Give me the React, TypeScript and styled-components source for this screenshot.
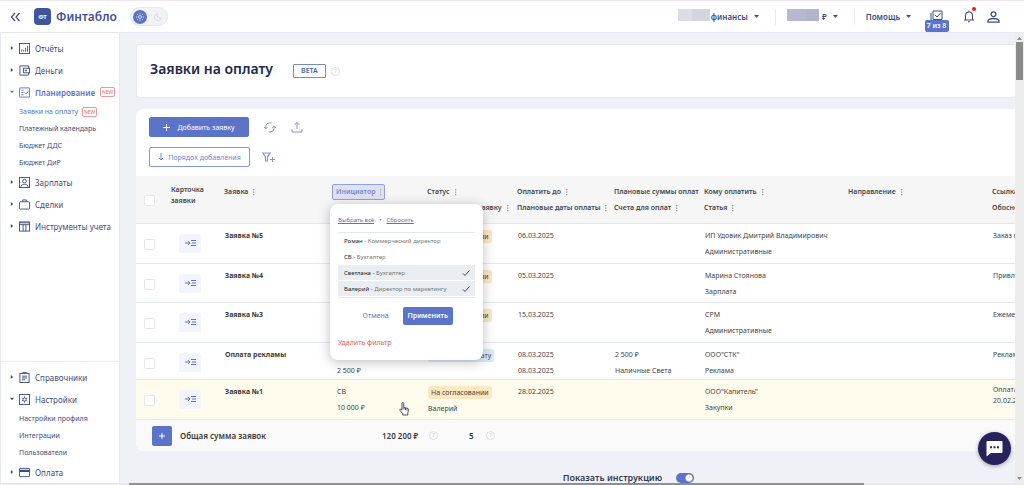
import React from "react";
import styled, { createGlobalStyle, css } from "styled-components";

const c = {
  blue: "#5b74c9",
  soft: "#8497dc",
  navy: "#3f4d7e",
  ink: "#1d2951",
  text: "#454545",
  line: "#e3e6f5",
  bg: "#f0f1f6",
};

const Global = createGlobalStyle`
  * { box-sizing: border-box; }
  html, body, #root { height: 100%; }
  body { margin: 0; overflow: hidden; font-family: "Noto Sans", "Open Sans", sans-serif; font-size: 7px; color: ${c.text}; background: ${c.bg}; }
  button { font: inherit; border: 0; background: none; padding: 0; margin: 0; color: inherit; cursor: pointer; display: inline-flex; align-items: center; }
  a { color: inherit; text-decoration: none; }
  svg { display: block; flex: none; }
  h1, p, ul { margin: 0; padding: 0; }
  ul { list-style: none; }
`;

const Shell = styled.div`
  height: 100vh;
  display: flex;
  flex-direction: column;
  border-top: 1px solid #f4e6f0;
`;

const TopBar = styled.header`
  flex: none;
  height: 32px;
  display: flex;
  align-items: center;
  background: #fff;
  border-bottom: 1px solid #e6e8ef;
  padding: 0 24px 0 10px;
  color: ${c.navy};
`;

const Brand = styled.a`
  width: 80px;
  display: flex;
  align-items: center;
  gap: 5px;
  margin: 0 16px 0 13px;
  font-size: 12px;
  font-weight: 600;
  line-height: 16px;
  color: #3f5292;
`;

const BrandMark = styled.span`
  flex: none;
  width: 17px;
  height: 17px;
  display: grid;
  place-items: center;
  border-radius: 4px;
  background: #42559a;
  color: #fff;
  font-size: 6px;
  font-weight: 700;
`;

const ThemeSwitch = styled.button`
  && {
    width: 38px;
    height: 19px;
    border-radius: 10px;
    border: 1px solid #e6e7ec;
    background: #f2f3f6;
    padding: 0 5px 0 2px;
    justify-content: space-between;
  }
`;

const Sun = styled.span`
  width: 14px;
  height: 14px;
  display: grid;
  place-items: center;
  border-radius: 50%;
  background: ${c.blue};
`;

const TopRight = styled.nav`
  margin-left: auto;
  display: flex;
  align-items: center;
  font-size: 8px;
  font-weight: 600;
`;

const TopMenu = styled.button`
  gap: 6px;
  line-height: 16px;
  & + & { margin-left: 16px; padding-left: 11px; border-left: 1px solid #e8eaf0; }
`;

const Masked = styled.span<{ $dark?: boolean }>`
  width: 32px;
  height: 12px;
  margin-right: -5px;
  margin-bottom: 4px;
  background: ${(p) => (p.$dark ? "linear-gradient(90deg, #b7bace 60%, #b0b5cb 60%)" : "linear-gradient(90deg, #dcdde5 45%, #d3d6e0 45%)")};
`;

const TaskButton = styled.button`
  && { position: relative; margin-left: 19px; }
`;

const TaskCount = styled.span`
  position: absolute;
  top: 10px;
  left: 50%;
  transform: translateX(-50%);
  width: 24px;
  border-radius: 2px;
  background: ${c.blue};
  color: #fff;
  font-size: 7px;
  line-height: 12px;
  white-space: nowrap;
`;

const BellButton = styled.button`
  && { position: relative; margin-left: 20px; }
  &::after { content: ""; position: absolute; top: -3px; right: -1px; width: 4px; height: 4px; border-radius: 50%; background: #fa1414; }
`;

const UserButton = styled.button`
  && { margin-left: 12px; }
`;

const Body = styled.div`
  flex: 1;
  min-height: 0;
  display: flex;
`;

const Sidebar = styled.nav`
  flex: none;
  width: 120px;
  display: flex;
  flex-direction: column;
  justify-content: space-between;
  background: #fff;
  border-right: 1px solid #e6e8f0;
  border-left: 1px solid #e6e8f0;
  color: ${c.navy};
`;

const NavGroup = styled.ul<{ $bottom?: boolean }>`
  padding-top: 4px;
  ${(p) => p.$bottom && css`border-top: 1px solid #e9ebf1;`}
`;

const NavLink = styled.a<{ $active?: boolean }>`
  height: 22px;
  display: flex;
  align-items: center;
  gap: 5px;
  padding-left: 9px;
  font-size: 8px;
  white-space: nowrap;
  font-weight: ${(p) => (p.$active ? 600 : 400)};
  color: ${(p) => (p.$active ? c.blue : "inherit")};
`;

const SubLink = styled.a<{ $active?: boolean }>`
  height: 17px;
  display: flex;
  align-items: center;
  gap: 4px;
  padding-left: 18px;
  font-size: 7px;
  white-space: nowrap;
  color: ${(p) => (p.$active ? c.blue : "inherit")};
`;

const Caret = styled.span<{ $open?: boolean }>`
  flex: none;
  width: 4px;
  height: 4px;
  background: currentColor;
  clip-path: ${(p) => (p.$open ? "polygon(0 20%, 100% 20%, 50% 80%)" : "polygon(20% 0, 80% 50%, 20% 100%)")};
`;

const NavIcon = styled.svg`
  width: 11px;
  height: 11px;
  fill: none;
  stroke: currentColor;
  stroke-width: 2;
`;

const NewTag = styled.span`
  border: 1px solid #e79a9a;
  border-radius: 2px;
  padding: 0 1px;
  font-size: 5px;
  line-height: 8px;
  font-weight: 400;
  color: #e06c6c;
`;

const Content = styled.main`
  flex: 1;
  min-width: 0;
  padding: 11px 0 0 16px;
  overflow: hidden;
  background: ${c.bg};
`;

const TitleCard = styled.section`
  height: 54px;
  display: flex;
  align-items: center;
  gap: 5px;
  padding-left: 13px;
  background: #fff;
  border: 1px solid #e8eaf0;
  border-right: 0;
  border-radius: 4px 0 0 4px;
  h1 { margin-right: 15px; padding-bottom: 4px; font-size: 14px; line-height: 20px; font-weight: 600; color: ${c.ink}; }
`;

const Beta = styled.span`
  border: 1px solid #7388d2;
  border-radius: 1px;
  padding: 0 7px;
  font-size: 7px;
  line-height: 12px;
  font-weight: 600;
  color: #4c62b0;
`;

const Hint = styled.span`
  width: 9px;
  height: 9px;
  display: inline-grid;
  place-items: center;
  border: 1px solid #dddfe4;
  border-radius: 50%;
  font-size: 5px;
  line-height: 7px;
  font-weight: 400;
  color: #bfc2ca;
`;

const TableCard = styled.section`
  margin-top: 11px;
  background: #fff;
  border-radius: 8px 0 0 8px;
  overflow: hidden;
`;

const Tools = styled.div`
  display: grid;
  gap: 10px;
  padding: 8px 13px 9px;
`;

const ToolRow = styled.div<{ $gap: number }>`
  display: flex;
  align-items: center;
  gap: ${(p) => p.$gap}px;
  height: 20px;
  color: ${c.soft};
`;

const ToolButton = styled.button<{ $primary?: boolean }>`
  && {
    width: ${(p) => (p.$primary ? "100px" : "101px")};
    height: 20px;
    justify-content: center;
    gap: ${(p) => (p.$primary ? "7px" : "4px")};
    border: 1px solid ${(p) => (p.$primary ? c.blue : c.soft)};
    border-radius: 2px;
    background: ${(p) => (p.$primary ? c.blue : "#fff")};
    color: ${(p) => (p.$primary ? "#fff" : "#7186d4")};
    white-space: nowrap;
  }
`;

const Grid = styled.table`
  width: 976px;
  table-layout: fixed;
  border-collapse: collapse;
  line-height: 16px;
  th, td { padding: 0; text-align: left; vertical-align: top; white-space: nowrap; }
  thead th { height: 47px; padding-top: 8px; background: #f6f6f7; font-weight: 600; }
  td { padding-top: 4px; }
  td:nth-child(n + 3) { padding-left: 1px; }
`;

const Row = styled.tr<{ $h: number; $mark?: boolean }>`
  height: ${(p) => p.$h}px;
  border-top: 1px solid ${c.line};
  background: ${(p) => (p.$mark ? "#fffcee" : "#fff")};
`;

const HeadLine = styled.span`
  display: flex;
  align-items: center;
  gap: 5px;
  height: 16px;
`;

const TwoLine = styled.span`
  display: block;
  line-height: 11px;
  white-space: normal;
`;

const Check = styled.input`
  appearance: none;
  display: block;
  width: 11px;
  height: 11px;
  margin: 11px 0 0 8px;
  border: 1px solid #e6e7eb;
  border-radius: 2px;
  background: #fff;
`;

const OpenButton = styled.button`
  && {
    width: 22px;
    height: 19px;
    margin: 6px 0 0 8px;
    justify-content: center;
    border-radius: 2px;
    background: #f2f5fe;
    color: ${c.blue};
  }
`;

const Name = styled.strong`
  font-weight: 700;
  color: #3c3c3c;
`;

const Badge = styled.span<{ $info?: boolean }>`
  display: inline-block;
  margin: 2px 0 1px;
  padding: 0 3px;
  border-radius: 2px;
  line-height: 13px;
  background: ${(p) => (p.$info ? "#d9eafc" : "#fde8c0")};
`;

const Anchor = styled.div`
  position: relative;
`;

const FilterChip = styled.button`
  && {
    height: 16px;
    margin-left: -4px;
    padding: 0 2px 0 3px;
    gap: 4px;
    border: 1px solid #8fa1e0;
    border-radius: 2px;
    background: #dee2f3;
    color: #7186d4;
    font-weight: 600;
  }
`;

const Popup = styled.div`
  position: absolute;
  z-index: 2;
  top: 20px;
  left: -6px;
  width: 153px;
  height: 156px;
  padding: 9px 8px 0;
  border-radius: 8px;
  background: #fff;
  box-shadow: 0 2px 12px rgba(40, 40, 60, 0.3);
  font-size: 7px;
  font-weight: 400;
`;

const QuickLinks = styled.div`
  display: flex;
  gap: 5px;
  height: 20px;
  line-height: 14px;
  border-bottom: 1px solid ${c.line};
  color: ${c.blue};
  font-size: 6px;
  a { text-decoration: underline; }
`;

const Options = styled.ul`
  border-bottom: 1px solid ${c.line};
  font-size: 6px;
`;

const Option = styled.li<{ $on?: boolean }>`
  display: flex;
  align-items: center;
  height: 15px;
  margin-bottom: 1px;
  padding: 0 5px 0 6px;
  white-space: pre;
  color: #757575;
  background: ${(p) => (p.$on ? "#e9eef2" : "#fff")};
  b { font-weight: 400; color: #222; }
  svg { margin-left: auto; }
`;

const PopupActions = styled.div`
  display: flex;
  justify-content: flex-end;
  align-items: center;
  gap: 14px;
  margin: 9px 22px 10px 0;
  color: ${c.blue};
`;

const Apply = styled.button`
  && {
    height: 18px;
    padding: 0 5px;
    border-radius: 2px;
    background: ${c.blue};
    color: #fff;
    font-weight: 600;
  }
`;

const Remove = styled.button`
  && { color: #e26060; line-height: 16px; }
`;

const Total = styled.footer`
  display: flex;
  align-items: center;
  height: 32px;
  padding-left: 16px;
  border-top: 1px solid ${c.line};
  background: #fafafa;
  font-size: 8px;
  font-weight: 600;
  color: #3a3a3a;
`;

const AddButton = styled.button`
  && {
    width: 20px;
    height: 20px;
    justify-content: center;
    border-radius: 2px;
    background: ${c.blue};
    color: #fff;
  }
`;

const TotalLabel = styled.span`
  width: 210px;
  padding-left: 8px;
`;

const TotalValue = styled.span<{ $w: number }>`
  width: ${(p) => p.$w}px;
  display: flex;
  align-items: center;
  justify-content: space-between;
  margin-right: 31px;
`;

const Instruction = styled.label`
  display: flex;
  align-items: center;
  justify-content: center;
  gap: 14px;
  margin-top: 18px;
  padding-left: 106px;
  font-size: 9px;
  line-height: 18px;
  font-weight: 600;
  color: #333a50;
`;

const Toggle = styled.input`
  appearance: none;
  width: 18px;
  height: 10px;
  margin: 0;
  border-radius: 5px;
  background: radial-gradient(circle at 13px 5px, #fff 3px, transparent 4px), ${c.blue};
`;

const ScrollTrack = styled.div`
  flex: none;
  width: 9px;
  display: flex;
  flex-direction: column;
  justify-content: space-between;
  align-items: center;
  padding: 4px 0 3px;
  background: #ededee;
  color: #8b8b8b;
`;

const ScrollThumb = styled.div`
  width: 7px;
  height: 38px;
  margin: 2px 0 auto;
  background: #8b8b8b;
`;

const BottomTrack = styled.div`
  flex: none;
  height: 2px;
  padding: 0 160px 0 129px;
  background: #e9e9ea;
  &::after { content: ""; display: block; height: 2px; background: #8f8f8f; }
`;

const ChatButton = styled.button`
  && {
    position: fixed;
    right: 13px;
    bottom: 20px;
    width: 33px;
    height: 33px;
    justify-content: center;
    border-radius: 50%;
    background: #26235c;
    box-shadow: 0 1px 4px rgba(0, 0, 0, 0.35);
  }
`;

const Pointer = styled.svg`
  position: absolute;
  z-index: 3;
  left: 62px;
  top: 18px;
`;

const icons: Record<string, React.ReactNode> = {
  reports: <><rect x="1" y="1" width="22" height="22" /><path d="M6 19v-5M10 19v-3M14 19v-8M18.500 19V6" /></>,
  money: <><path d="M21 7V2H2v20h19v-5" /><rect x="10" y="7" width="13" height="10" /><circle cx="15" cy="12" r="1.500" /></>,
  plan: <><rect x="1" y="2" width="22" height="20" rx="1" /><path d="M5 7h5M5 12h5M5 17h5M12.500 12l3 3 5-6" /></>,
  salary: <><rect x="1" y="1" width="22" height="22" /><circle cx="12" cy="9" r="4" /><path d="M4 22c1-5 4-6 8-6s7 1 8 6" /></>,
  deals: <><rect x="1" y="6" width="22" height="16" rx="2" /><path d="M8 6V2h8v4" /></>,
  tools: <><rect x="1" y="2" width="22" height="20" /><path d="M1 8h22M9 8v14M15 8v14M1 4h22" /></>,
  books: <><rect x="2" y="3" width="20" height="20" /><path d="M8 3V1h8v2M6.500 9h11M6.500 13h11M6.500 17h7" /></>,
  settings: <><rect x="1" y="1" width="22" height="22" /><circle cx="12" cy="12" r="3.500" /><path d="M12 5v3M12 16v3M6 8.500l2.500 1.500M15.500 14l2.500 1.500M6 15.500L8.500 14M15.500 10L18 8.500" /></>,
  pay: <><rect x="1" y="3" width="22" height="18" rx="1" /><path d="M1 8.500h22" strokeWidth="5" /></>,
};

const Icon = ({ name }: { name: string }) => (
  <NavIcon viewBox="0 0 24 24" aria-hidden>{icons[name]}</NavIcon>
);

const Item = ({ icon, label, open, active, tag }: { icon: string; label: string; open?: boolean; active?: boolean; tag?: boolean }) => (
  <li>
    <NavLink href="#" $active={active}>
      <Caret $open={open} />
      <Icon name={icon} />
      {label}
      {tag && <NewTag>NEW</NewTag>}
    </NavLink>
  </li>
);

const Sub = ({ label, active }: { label: string; active?: boolean }) => (
  <li>
    <SubLink href="#" $active={active}>
      {label}
      {active && <NewTag>NEW</NewTag>}
    </SubLink>
  </li>
);

const Dots = () => (
  <svg width="2" height="8" viewBox="0 0 2 8" fill="currentColor" opacity=".5" aria-hidden>
    <path d="M0 1h1.300v1.300H0zM0 3.500h1.300v1.300H0zM0 6h1.300v1.300H0z" />
  </svg>
);

const DownCaret = () => (
  <svg width="5" height="3" viewBox="0 0 5 3" fill="currentColor" aria-hidden><path d="M0 0h5L2.500 3z" /></svg>
);

const Head = ({ lines }: { lines: string[] }) => (
  <th scope="col">
    {lines.map((l) => (
      <HeadLine key={l}>
        {l}
        {l !== "Плановые суммы оплат" && <Dots />}
      </HeadLine>
    ))}
  </th>
);

const Lines = ({ of }: { of?: string[] }) => (
  <td>{of?.map((l, i) => <div key={i}>{l}</div>)}</td>
);

type Request = {
  name: string; h: number; who?: string[]; badge: string; info?: boolean; approver?: string;
  dates: string[]; sums?: string[]; payee: string[]; link: string[]; mark?: boolean;
};

const requests: Request[] = [
  { name: "Заявка №5", h: 40, badge: "На согласовании", dates: ["06.03.2025"], payee: ["ИП Удовик Дмитрий Владимирович", "Административные"], link: ["Заказ канцелярии"] },
  { name: "Заявка №4", h: 39, badge: "На согласовании", dates: ["05.03.2025"], payee: ["Марина Стоянова", "Зарплата"], link: ["Привлечение"] },
  { name: "Заявка №3", h: 40, badge: "На согласовании", dates: ["15.03.2025"], payee: ["СРМ", "Административные"], link: ["Ежемесячно"] },
  { name: "Оплата рекламы", h: 37, who: ["Светлана", "2 500 ₽"], badge: "Передан в оплату", info: true, dates: ["08.03.2025", "08.03.2025"], sums: ["2 500 ₽", "Наличные Света"], payee: ["ООО\"СТК\"", "Реклама"], link: ["Реклама"] },
  { name: "Заявка №1", h: 40, who: ["СВ", "10 000 ₽"], badge: "На согласовании", approver: "Валерий", dates: ["28.02.2025"], payee: ["ООО\"Капитель\"", "Закупки"], link: ["Оплата счета", "20.02.2025"], mark: true },
];

const people = [
  { name: "Роман", role: "Коммерческий директор" },
  { name: "СВ", role: "Бухгалтер" },
  { name: "Светлана", role: "Бухгалтер", on: true },
  { name: "Валерий", role: "Директор по маркетингу", on: true },
];

const widths = [35, 53, 112, 91, 90, 97, 90, 144, 144, 120];

const FilterPopup = () => (
  <Popup role="dialog" aria-label="Инициатор">
    <QuickLinks>
      <a href="#">Выбрать всё</a>
      <span>•</span>
      <a href="#">Сбросить</a>
    </QuickLinks>
    <Options>
      {people.map((p) => (
        <Option key={p.name} $on={p.on}>
          <b>{p.name} - </b>{p.role}
          {p.on && (
            <svg width="8" height="8" viewBox="0 0 8 8" fill="none" stroke="#3d4347" aria-hidden><path d="M1 4.500l2 2L7.500 1.500" /></svg>
          )}
        </Option>
      ))}
    </Options>
    <PopupActions>
      <button>Отмена</button>
      <Apply>Применить</Apply>
    </PopupActions>
    <Remove>Удалить фильтр</Remove>
  </Popup>
);

export default function App() {
  return (
    <Shell>
      <Global />
      <TopBar>
        <button aria-label="Свернуть">
          <svg width="11" height="10" viewBox="0 0 11 10" fill="none" stroke="currentColor" strokeWidth="1.200"><path d="M5 1L1.500 5 5 9M9.500 1L6 5l3.500 4" /></svg>
        </button>
        <Brand href="#"><BrandMark>ФТ</BrandMark>Финтабло</Brand>
        <ThemeSwitch aria-label="Тема">
          <Sun>
            <svg width="8" height="8" viewBox="0 0 8 8" fill="none" stroke="#fff" strokeWidth=".7"><circle cx="4" cy="4" r="1.500" /><path d="M4 0v1.200M4 6.800V8M0 4h1.200M6.800 4H8M1.200 1.200l.8.8M6 6l.8.8M1.200 6.800L2 6M6 2l.8-.8" /></svg>
          </Sun>
          <svg width="8" height="8" viewBox="0 0 8 8" fill="none" stroke="#d3d5dc" strokeWidth=".9"><path d="M3.200.8a3.400 3.400 0 1 0 4 4.400A3.400 3.400 0 0 1 3.200.8z" /></svg>
        </ThemeSwitch>
        <TopRight>
          <TopMenu><Masked />финансы <DownCaret /></TopMenu>
          <TopMenu><Masked $dark />&nbsp;₽ <DownCaret /></TopMenu>
          <TopMenu>Помощь <DownCaret /></TopMenu>
          <TaskButton>
            <svg width="13" height="14" viewBox="0 0 13 14" fill="none" stroke="currentColor"><path d="M3 1h9v8.500H3zM1 3v9h9M5 5l2 2 3.500-4" /></svg>
            <TaskCount>7 из 8</TaskCount>
          </TaskButton>
          <BellButton aria-label="Уведомления">
            <svg width="12" height="13" viewBox="0 0 12 13" fill="none" stroke="currentColor" strokeWidth="1.100"><path d="M1 10h10M2.500 10V5.500a3.500 3.500 0 0 1 7 0V10M6 2V.5M5 11.800h2" /></svg>
          </BellButton>
          <UserButton aria-label="Профиль">
            <svg width="13" height="12" viewBox="0 0 13 12" fill="none" stroke="currentColor" strokeWidth="1.300"><circle cx="6.500" cy="3.200" r="2.400" /><path d="M1 11.200V9.800c0-1.300 3-2.300 5.500-2.300S12 8.500 12 9.800v1.400z" /></svg>
          </UserButton>
        </TopRight>
      </TopBar>

      <Body>
        <Sidebar>
          <NavGroup>
            <Item icon="reports" label="Отчёты" />
            <Item icon="money" label="Деньги" />
            <Item icon="plan" label="Планирование" open active tag />
            <Sub label="Заявки на оплату" active />
            <Sub label="Платежный календарь" />
            <Sub label="Бюджет ДДС" />
            <Sub label="Бюджет ДиР" />
            <Item icon="salary" label="Зарплаты" />
            <Item icon="deals" label="Сделки" />
            <Item icon="tools" label="Инструменты учета" />
          </NavGroup>
          <NavGroup $bottom>
            <Item icon="books" label="Справочники" />
            <Item icon="settings" label="Настройки" open />
            <Sub label="Настройки профиля" />
            <Sub label="Интеграции" />
            <Sub label="Пользователи" />
            <Item icon="pay" label="Оплата" />
          </NavGroup>
        </Sidebar>

        <Content>
          <TitleCard>
            <h1>Заявки на оплату</h1>
            <Beta>BETA</Beta>
            <Hint>?</Hint>
          </TitleCard>

          <TableCard>
            <Tools>
              <ToolRow $gap={15}>
                <ToolButton $primary>
                  <svg width="7" height="7" viewBox="0 0 7 7" stroke="currentColor"><path d="M3.500 0v7M0 3.500h7" /></svg>
                  Добавить заявку
                </ToolButton>
                <button aria-label="Обновить">
                  <svg width="12" height="11" viewBox="0 0 12 11" fill="none" stroke="currentColor"><path d="M1.800 6.500V5a4 4 0 0 1 4-4h1.700M10.200 4.500V6a4 4 0 0 1-4 4H4.500M0 5l1.800 2L3.600 5M8.400 6l1.800-2L12 6" /></svg>
                </button>
                <button aria-label="Выгрузить">
                  <svg width="12" height="12" viewBox="0 0 12 12" fill="none" stroke="currentColor"><path d="M1 8v3h10V8M6 8V1.500M3.500 4L6 1.500 8.500 4" /></svg>
                </button>
              </ToolRow>
              <ToolRow $gap={12}>
                <ToolButton>
                  <svg width="6" height="8" viewBox="0 0 6 8" fill="none" stroke="currentColor"><path d="M3 0v7M1 5l2 2 2-2" /></svg>
                  Порядок добавления
                </ToolButton>
                <button aria-label="Добавить фильтр">
                  <svg width="13" height="11" viewBox="0 0 13 11" fill="none" stroke="currentColor" strokeWidth="1.200"><path d="M.8 1h7.400L5.500 4.800V9h-2V4.800zM8 7.500h5M10.500 5v5" /></svg>
                </button>
              </ToolRow>
            </Tools>

            <Grid>
              <colgroup>{widths.map((w, i) => <col key={i} width={w} />)}</colgroup>
              <thead>
                <tr>
                  <th scope="col"><Check type="checkbox" aria-label="Выбрать все заявки" /></th>
                  <th scope="col"><TwoLine>Карточка заявки</TwoLine></th>
                  <Head lines={["Заявка"]} />
                  <th scope="col">
                    <Anchor>
                      <FilterChip>Инициатор <Dots /></FilterChip>
                      <FilterPopup />
                    </Anchor>
                  </th>
                  <Head lines={["Статус", "Согласующий заявку"]} />
                  <Head lines={["Оплатить до", "Плановые даты оплаты"]} />
                  <Head lines={["Плановые суммы оплат", "Счета для оплат"]} />
                  <Head lines={["Кому оплатить", "Статья"]} />
                  <Head lines={["Направление"]} />
                  <Head lines={["Ссылка на документ", "Обоснование"]} />
                </tr>
              </thead>
              <tbody>
                {requests.map((r) => (
                  <Row key={r.name} $h={r.h} $mark={r.mark}>
                    <td><Check type="checkbox" aria-label={r.name} /></td>
                    <td>
                      <OpenButton aria-label="Открыть карточку">
                        <svg width="11" height="8" viewBox="0 0 11 8" fill="none" stroke="currentColor"><path d="M0 4h5M3 2l2 2-2 2M6 1.500h5M7 4h4M6 6.500h5" /></svg>
                      </OpenButton>
                    </td>
                    <td><Name>{r.name}</Name></td>
                    <td>
                      <Anchor>
                        {r.who?.map((w) => <div key={w}>{w}</div>)}
                        {r.mark && (
                          <Pointer width="10" height="14" viewBox="0 0 10 14" fill="#fff" stroke="#333a50" strokeWidth=".9" aria-hidden>
                            <path d="M3 8V1.500a.9.900 0 0 1 1.800 0V5.500l3.700.8c.7.200 1 .6 1 1.200l-.7 3.500v2H3.700v-1.500L.8 8.300c-.3-.8.5-1.300 1.200-.9zM6.500 6v2M8 6.300v2M4.800 5.500v2" />
                          </Pointer>
                        )}
                      </Anchor>
                    </td>
                    <td>
                      <Badge $info={r.info}>{r.badge}</Badge>
                      {r.approver && <div>{r.approver}</div>}
                    </td>
                    <Lines of={r.dates} />
                    <Lines of={r.sums} />
                    <Lines of={r.payee} />
                    <td />
                    <td>{r.mark ? <TwoLine>{r.link[0]}<br />{r.link[1]}</TwoLine> : r.link[0]}</td>
                  </Row>
                ))}
              </tbody>
            </Grid>
            <Total>
              <AddButton aria-label="Добавить">
                <svg width="6" height="6" viewBox="0 0 6 6" stroke="currentColor"><path d="M3 0v6M0 3h6" /></svg>
              </AddButton>
              <TotalLabel>Общая сумма заявок</TotalLabel>
              <TotalValue $w={56}>120 200 ₽ <Hint>?</Hint></TotalValue>
              <TotalValue $w={26}>5 <Hint>?</Hint></TotalValue>
            </Total>
          </TableCard>

          <Instruction>
            Показать инструкцию
            <Toggle type="checkbox" role="switch" defaultChecked />
          </Instruction>
        </Content>

        <ScrollTrack aria-hidden>
          <svg width="5" height="3" viewBox="0 0 5 3" fill="currentColor"><path d="M0 3h5L2.500 0z" /></svg>
          <ScrollThumb />
          <DownCaret />
        </ScrollTrack>
      </Body>
      <BottomTrack aria-hidden />
      <ChatButton aria-label="Чат">
        <svg width="17" height="17" viewBox="0 0 17 17"><path d="M1.500 1h14a1 1 0 0 1 1 1v10a1 1 0 0 1-1 1H5l-4.500 3.500V2a1 1 0 0 1 1-1z" fill="#fff" /><path d="M4 6.200h2v2H4zM7.500 6.200h2v2h-2zM11 6.200h2v2h-2z" fill="#26235c" /></svg>
      </ChatButton>
    </Shell>
  );
}
